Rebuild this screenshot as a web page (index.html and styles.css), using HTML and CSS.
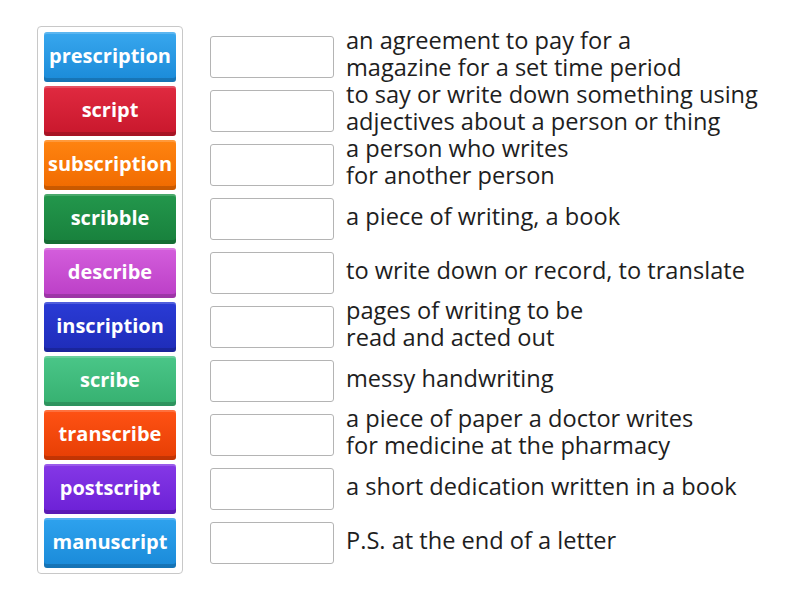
FILE: index.html
```html
<!DOCTYPE html>
<html>
<head>
<meta charset="utf-8">
<link rel="stylesheet" href="styles.css">
</head>
<body>
<div class="page">
  <div class="bank">
    <div class="tile t-prescription">prescription</div>
    <div class="tile t-script">script</div>
    <div class="tile t-subscription">subscription</div>
    <div class="tile t-scribble">scribble</div>
    <div class="tile t-describe">describe</div>
    <div class="tile t-inscription">inscription</div>
    <div class="tile t-scribe">scribe</div>
    <div class="tile t-transcribe">transcribe</div>
    <div class="tile t-postscript">postscript</div>
    <div class="tile t-manuscript">manuscript</div>
  </div>
  <div class="rows">
    <div class="row"><div class="slot"></div><div class="def">an agreement to pay for a<br>magazine for a set time period</div></div>
    <div class="row"><div class="slot"></div><div class="def">to say or write down something using<br>adjectives about a person or thing</div></div>
    <div class="row"><div class="slot"></div><div class="def">a person who writes<br>for another person</div></div>
    <div class="row"><div class="slot"></div><div class="def">a piece of writing, a book</div></div>
    <div class="row"><div class="slot"></div><div class="def">to write down or record, to translate</div></div>
    <div class="row"><div class="slot"></div><div class="def">pages of writing to be<br>read and acted out</div></div>
    <div class="row"><div class="slot"></div><div class="def">messy handwriting</div></div>
    <div class="row"><div class="slot"></div><div class="def">a piece of paper a doctor writes<br>for medicine at the pharmacy</div></div>
    <div class="row"><div class="slot"></div><div class="def">a short dedication written in a book</div></div>
    <div class="row"><div class="slot"></div><div class="def">P.S. at the end of a letter</div></div>
  </div>
</div>
</body>
</html>
```
FILE: styles.css
```css
html, body {
  margin: 0;
  padding: 0;
  background: #ffffff;
}
body {
  font-family: "Open Sans", "Noto Sans", sans-serif;
}
.page {
  display: flex;
  align-items: flex-start;
  padding: 26px 0 0 37px;
}
.bank {
  display: flex;
  flex-direction: column;
  gap: 4px;
  padding: 5px 6px;
  border: 1px solid #c8c8c8;
  border-radius: 4px;
}
.tile {
  width: 132px;
  height: 50px;
  box-sizing: border-box;
  border-radius: 3px;
  display: flex;
  align-items: center;
  justify-content: center;
  color: #ffffff;
  font-weight: 700;
  font-size: 20px;
  padding-bottom: 4px;
  box-shadow: inset 0 -4px 0 rgba(0,0,0,0.16), inset 0 2px 0 rgba(255,255,255,0.18);
}
.t-prescription { background: linear-gradient(#38a7ee, #1a8ad8); }
.t-script { background: linear-gradient(#e02a40, #c8172c); }
.t-subscription { background: linear-gradient(#ff8410, #f06a00); }
.t-scribble { background: linear-gradient(#23974c, #18803c); }
.t-describe { background: linear-gradient(#d45edc, #bb3ec6); }
.t-inscription { background: linear-gradient(#2a3bd6, #1e2cb8); }
.t-scribe { background: linear-gradient(#4ac688, #36b070); }
.t-transcribe { background: linear-gradient(#ff5214, #e63e04); }
.t-postscript { background: linear-gradient(#8538e6, #6c20d6); }
.t-manuscript { background: linear-gradient(#2ea2ee, #1a8ad8); }
.rows {
  display: flex;
  flex-direction: column;
  gap: 4px;
  padding-top: 6px;
  margin-left: 27px;
}
.row {
  height: 50px;
  display: flex;
  align-items: center;
}
.slot {
  width: 124px;
  height: 42px;
  box-sizing: border-box;
  border: 1px solid #b4b4b4;
  border-radius: 3px;
  background: #ffffff;
  flex: none;
}
.def {
  margin-left: 12px;
  margin-bottom: 6px;
  font-size: 23.6px;
  line-height: 26.6px;
  color: #1e1e1e;
  white-space: nowrap;
}
```
